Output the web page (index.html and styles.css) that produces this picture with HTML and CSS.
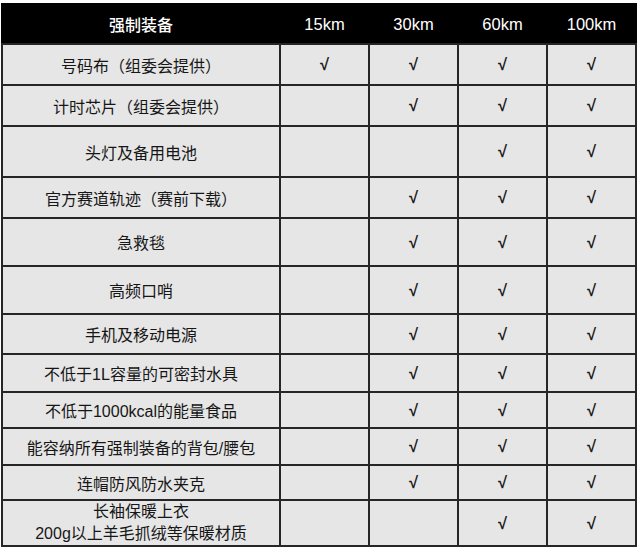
FILE: index.html
```html
<!DOCTYPE html>
<html lang="zh">
<head>
<meta charset="utf-8">
<link rel="stylesheet" href="styles.css">
</head>
<body>
<div class="sheet">
  <div class="head">
    <div class="hc">强制装备</div>
    <div class="hc num">15km</div>
    <div class="hc num">30km</div>
    <div class="hc num">60km</div>
    <div class="hc num">100km</div>
  </div>

  <div class="c item">号码布（组委会提供）</div><div class="c ok">√</div><div class="c ok">√</div><div class="c ok">√</div><div class="c ok">√</div>
  <div class="c item">计时芯片（组委会提供）</div><div class="c"></div><div class="c ok">√</div><div class="c ok">√</div><div class="c ok">√</div>
  <div class="c item">头灯及备用电池</div><div class="c"></div><div class="c"></div><div class="c ok">√</div><div class="c ok">√</div>
  <div class="c item">官方赛道轨迹（赛前下载）</div><div class="c"></div><div class="c ok">√</div><div class="c ok">√</div><div class="c ok">√</div>
  <div class="c item">急救毯</div><div class="c"></div><div class="c ok">√</div><div class="c ok">√</div><div class="c ok">√</div>
  <div class="c item">高频口哨</div><div class="c"></div><div class="c ok">√</div><div class="c ok">√</div><div class="c ok">√</div>
  <div class="c item">手机及移动电源</div><div class="c"></div><div class="c ok">√</div><div class="c ok">√</div><div class="c ok">√</div>
  <div class="c item">不低于1L容量的可密封水具</div><div class="c"></div><div class="c ok">√</div><div class="c ok">√</div><div class="c ok">√</div>
  <div class="c item">不低于1000kcal的能量食品</div><div class="c"></div><div class="c ok">√</div><div class="c ok">√</div><div class="c ok">√</div>
  <div class="c item">能容纳所有强制装备的背包/腰包</div><div class="c"></div><div class="c ok">√</div><div class="c ok">√</div><div class="c ok">√</div>
  <div class="c item">连帽防风防水夹克</div><div class="c"></div><div class="c ok">√</div><div class="c ok">√</div><div class="c ok">√</div>
  <div class="c item two">长袖保暖上衣<br>200g以上羊毛抓绒等保暖材质</div><div class="c"></div><div class="c"></div><div class="c ok">√</div><div class="c ok">√</div>
</div>
</body>
</html>
```

FILE: styles.css
```css
html, body {
  margin: 0;
  padding: 0;
  background: #ffffff;
}

body {
  padding: 3px 0 0 1px;
  font-family: "Liberation Sans", "Noto Sans CJK SC", sans-serif;
  color: #1c1c1c;
}

.sheet {
  display: grid;
  width: 632px;
  grid-template-columns: 276px 87px 87px 87px 87px;
  grid-template-rows: 38px 39px 39px 49px 39px 46px 46px 38px 36px 34px 35px 33px 44px;
  gap: 2px;
  padding: 2px;
  background: #262626;
}

.head {
  grid-column: 1 / -1;
  display: grid;
  grid-template-columns: 276px 87px 87px 87px 87px;
  column-gap: 2px;
  background: #000000;
  margin: -2px -2px 0 -2px;
  padding: 2px 2px 0 2px;
}

.hc {
  display: flex;
  align-items: center;
  justify-content: center;
  color: #ffffff;
  font-size: 16px;
  font-weight: 500;
}

.hc.num {
  font-size: 16.5px;
  font-weight: normal;
}

.c {
  display: flex;
  align-items: center;
  justify-content: center;
  background: #e6e6e6;
  font-size: 16px;
  text-align: center;
  color: #161616;
}

.item.two {
  line-height: 22px;
}

.ok {
  font-weight: bold;
  font-size: 16.5px;
  color: #1a1a1a;
}
```
